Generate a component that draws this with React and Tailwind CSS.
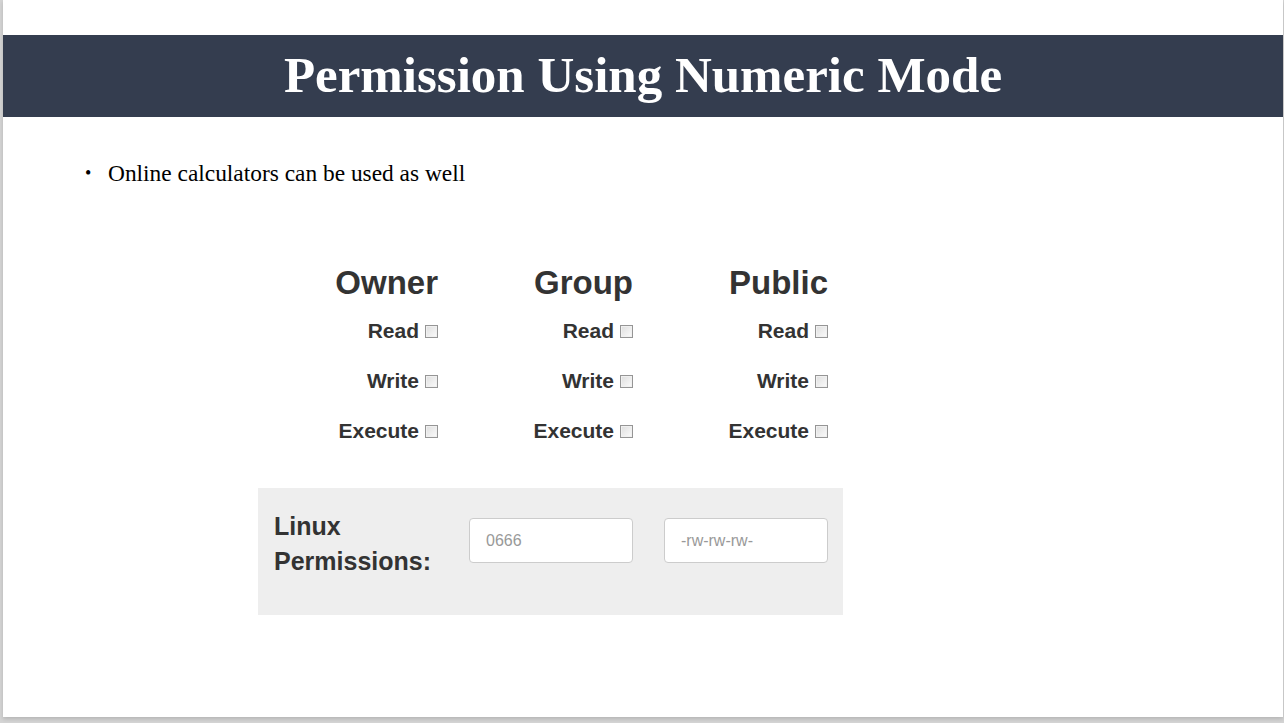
import React from "react";

const cols = ["Owner", "Group", "Public"];
const perms = ["Read", "Write", "Execute"];

const Box = () => (
  <span className="ml-[6px] inline-block h-[13px] w-[13px] border border-[#959595] bg-gradient-to-br from-[#dedede] to-[#fbfbfb] shadow-[inset_0_0_0_1px_#f0f0f0]" />
);

const App = () => {
  return (
    <div className="min-h-[723px] w-full bg-[#d4d4d4]">
      <div className="ml-[3px] flex h-[717px] w-[1280px] flex-col bg-white shadow-[0_2px_4px_rgba(0,0,0,0.15)]">
        {/* title bar */}
        <div className="mt-[35px] flex h-[82px] items-center justify-center bg-[#343d4f]">
          <h1 className="pb-[1px] font-['Liberation_Serif',serif] text-[51px] font-bold text-white">
            Permission Using Numeric Mode
          </h1>
        </div>

        {/* bullet */}
        <div className="mt-[39px] flex items-center pl-[82px] font-['Liberation_Serif',serif] text-[23.4px] text-black">
          <span className="w-[23px] text-[18px]">•</span>
          <span>Online calculators can be used as well</span>
        </div>

        {/* calculator */}
        <div className="mt-[73px] flex flex-col font-['Liberation_Sans',Arial,sans-serif] text-[#333333]">
          <div className="ml-[240px] flex">
            {cols.map((c) => (
              <div key={c} className="flex w-[195px] flex-col items-end">
                <div className="mb-[-2px] h-[38px] text-[33px] font-bold leading-[38px]">{c}</div>
                {perms.map((p) => (
                  <div key={p} className="mt-[12px] flex h-[38px] items-center text-[21px] font-bold">
                    {p}
                    <Box />
                  </div>
                ))}
              </div>
            ))}
          </div>

          <div className="ml-[255px] mt-[38px] flex h-[127px] w-[585px] items-start bg-[#eeeeee] pt-[30px]">
            <div className="ml-[16px] w-[180px] text-[25px] font-bold leading-[35px] -mt-[9px]">
              Linux
              <br />
              Permissions:
            </div>
            <div className="ml-[15px] flex h-[45px] w-[164px] items-center rounded-[4px] border border-[#cccccc] bg-white px-[16px] text-[16px] text-[#999999]">
              0666
            </div>
            <div className="ml-[31px] flex h-[45px] w-[164px] items-center rounded-[4px] border border-[#cccccc] bg-white px-[16px] text-[16px] text-[#999999]">
              -rw-rw-rw-
            </div>
          </div>
        </div>
      </div>
    </div>
  );
};

export default App;
